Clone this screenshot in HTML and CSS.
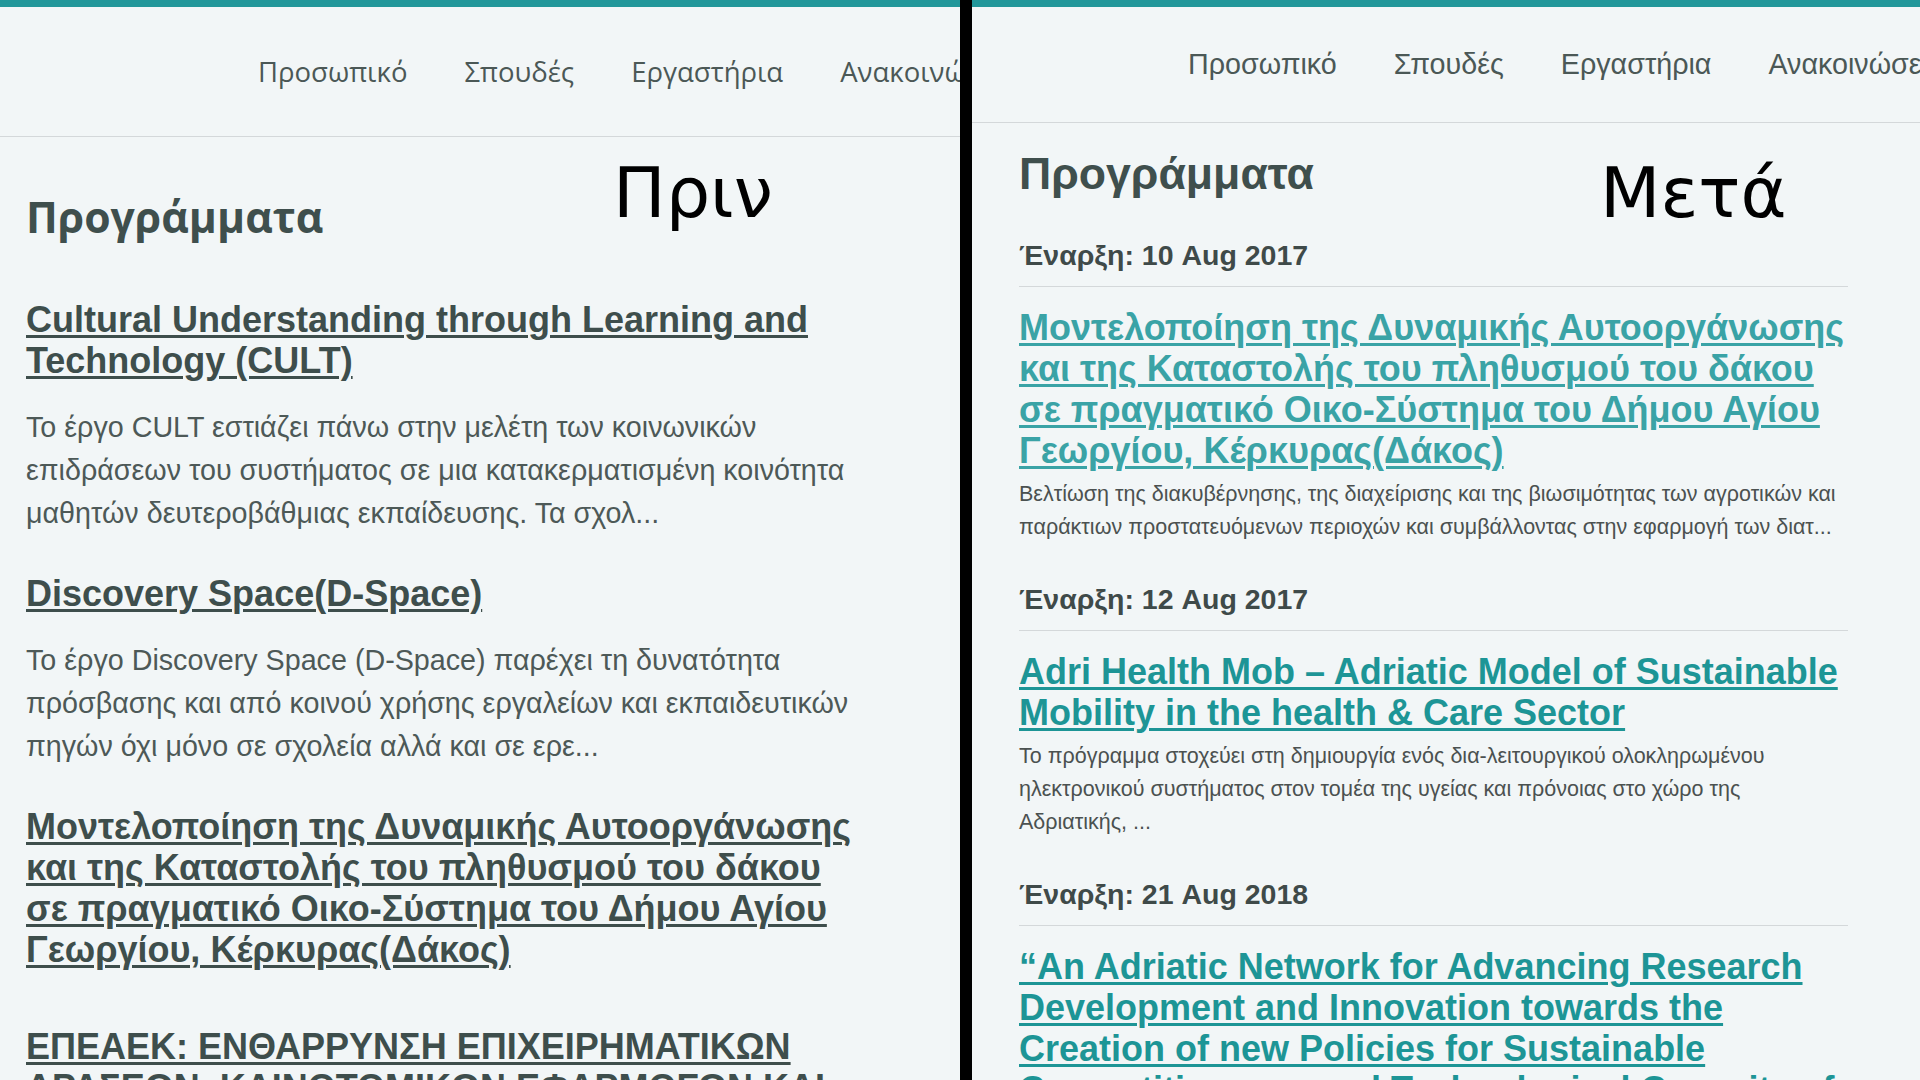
FILE: index.html
```html
<!DOCTYPE html>
<html lang="el">
<head>
<meta charset="utf-8">
<title>Προγράμματα — Πριν / Μετά</title>
<link rel="stylesheet" href="styles.css">
</head>
<body>
<div class="compare">
  <section class="panel before">
    <header class="topnav">
      <nav class="menu">
        <a href="#">Προσωπικό</a>
        <a href="#">Σπουδές</a>
        <a href="#">Εργαστήρια</a>
        <a href="#">Ανακοινώσεις</a>
      </nav>
    </header>
    <main class="content">
      <h2 class="page-title">Προγράμματα</h2>
      <div class="list">
        <article class="item">
          <a class="item-title" href="#">Cultural Understanding through Learning and Technology (CULT)</a>
          <p class="item-desc">Το έργο CULT εστιάζει πάνω στην μελέτη των κοινωνικών επιδράσεων του συστήματος σε μια κατακερματισμένη κοινότητα μαθητών δευτεροβάθμιας εκπαίδευσης. Τα σχολ...</p>
        </article>
        <article class="item">
          <a class="item-title" href="#">Discovery Space(D-Space)</a>
          <p class="item-desc">Το έργο Discovery Space (D-Space) παρέχει τη δυνατότητα πρόσβασης και από κοινού χρήσης εργαλείων και εκπαιδευτικών πηγών όχι μόνο σε σχολεία αλλά και σε ερε...</p>
        </article>
        <article class="item item-nodesc">
          <a class="item-title" href="#">Μοντελοποίηση της Δυναμικής Αυτοοργάνωσης και της Καταστολής του πληθυσμού του δάκου σε πραγματικό Οικο-Σύστημα του Δήμου Αγίου Γεωργίου, Κέρκυρας(Δάκος)</a>
        </article>
        <article class="item">
          <a class="item-title" href="#">ΕΠΕΑΕΚ: ΕΝΘΑΡΡΥΝΣΗ ΕΠΙΧΕΙΡΗΜΑΤΙΚΩΝ ΔΡΑΣΕΩΝ, ΚΑΙΝΟΤΟΜΙΚΩΝ ΕΦΑΡΜΟΓΩΝ ΚΑΙ ΣΥΝΕΡΓΑΣΙΩΝ</a>
        </article>
      </div>
    </main>
    <div class="stamp stamp-before">Πριν</div>
  </section>

  <div class="divider"></div>

  <section class="panel after">
    <header class="topnav">
      <nav class="menu">
        <a href="#">Προσωπικό</a>
        <a href="#">Σπουδές</a>
        <a href="#">Εργαστήρια</a>
        <a href="#">Ανακοινώσεις</a>
      </nav>
    </header>
    <main class="content">
      <h2 class="page-title">Προγράμματα</h2>
      <div class="list">
        <article class="item">
          <div class="date">Έναρξη: 10 Aug 2017</div>
          <a class="item-title visited" href="#">Μοντελοποίηση της Δυναμικής Αυτοοργάνωσης και της Καταστολής του πληθυσμού του δάκου σε πραγματικό Οικο-Σύστημα του Δήμου Αγίου Γεωργίου, Κέρκυρας(Δάκος)</a>
          <p class="item-desc">Βελτίωση της διακυβέρνησης, της διαχείρισης και της βιωσιμότητας των αγροτικών και παράκτιων προστατευόμενων περιοχών και συμβάλλοντας στην εφαρμογή των διατ...</p>
        </article>
        <article class="item">
          <div class="date">Έναρξη: 12 Aug 2017</div>
          <a class="item-title" href="#">Adri Health Mob – Adriatic Model of Sustainable Mobility in the health &amp; Care Sector</a>
          <p class="item-desc">Το πρόγραμμα στοχεύει στη δημιουργία ενός δια-λειτουργικού ολοκληρωμένου ηλεκτρονικού συστήματος στον τομέα της υγείας και πρόνοιας στο χώρο της Αδριατικής, ...</p>
        </article>
        <article class="item">
          <div class="date">Έναρξη: 21 Aug 2018</div>
          <a class="item-title" href="#">“An Adriatic Network for Advancing Research Development and Innovation towards the Creation of new Policies for Sustainable Competitiveness and Technological Capacity of SMEs”</a>
        </article>
      </div>
    </main>
    <div class="stamp stamp-after">Μετά</div>
  </section>
</div>
</body>
</html>
```

FILE: styles.css
```css
* { box-sizing: border-box; }

html, body {
  margin: 0;
  padding: 0;
  width: 1920px;
  height: 1080px;
  overflow: hidden;
  background: #f2f6f7;
}

.compare {
  display: flex;
  width: 1920px;
  height: 1080px;
}

.panel {
  position: relative;
  height: 1080px;
  overflow: hidden;
  background: #f2f6f7;
  border-top: 7px solid #22979a;
}

.before { width: 960px; flex: 0 0 960px; }
.after  { width: 948px; flex: 0 0 948px; }

.divider {
  flex: 0 0 12px;
  width: 12px;
  height: 1080px;
  background: #000;
}

/* ---------- top navigation ---------- */
.topnav {
  display: flex;
  align-items: center;
  border-bottom: 1px solid #d4d8da;
}

.menu {
  display: flex;
  align-items: center;
  gap: 57px;
  white-space: nowrap;
}

.menu a {
  color: #4b5856;
  text-decoration: none;
}

.before .topnav { height: 130px; padding-left: 258px; }
.before .menu a { font-family: "Open Sans", "Noto Sans", sans-serif; font-size: 27.5px; }

.after .topnav { height: 116px; padding-left: 216px; }
.after .menu a { font-family: "Liberation Sans", Arial, sans-serif; font-size: 28.7px; }

/* ---------- content ---------- */
.content { display: block; }

.page-title {
  margin: 0;
  color: #3f4f4d;
  font-weight: 700;
}

.list {
  display: flex;
  flex-direction: column;
}

.item {
  display: flex;
  flex-direction: column;
  align-items: flex-start;
}

.item-title {
  font-family: "Liberation Sans", Arial, sans-serif;
  font-weight: 700;
  font-size: 36px;
  line-height: 41px;
  text-decoration: underline;
  text-decoration-thickness: 3px;
  text-underline-offset: 3px;
}

.item-desc { margin: 0; font-family: "Liberation Sans", Arial, sans-serif; }

/* before */
.before .content { padding: 0 104px 0 26px; }
.before .page-title {
  font-family: "Open Sans", "Noto Sans", sans-serif;
  font-size: 42.7px;
  line-height: 53px;
  margin-top: 53px;
  margin-bottom: 56px;
}
.before .list { gap: 38px; }
.before .item { gap: 25px; }
.before .item-nodesc { margin-bottom: 18px; }
.before .item-title { color: #3e4e4c; }
.before .item-desc {
  font-size: 28.7px;
  line-height: 43px;
  color: #4d5957;
}

/* after */
.after .content { padding: 0 72px 0 47px; }
.after .page-title {
  font-family: "Liberation Sans", Arial, sans-serif;
  font-size: 44.6px;
  line-height: 50px;
  margin-top: 26px;
  margin-bottom: 39px;
}
.after .list { gap: 38px; }
.after .date {
  align-self: stretch;
  font-family: "Liberation Sans", Arial, sans-serif;
  font-weight: 700;
  font-size: 28.5px;
  line-height: 34px;
  color: #3f4a49;
  padding-bottom: 14px;
  border-bottom: 1px solid #d4d8da;
  margin-bottom: 20px;
}
.after .item-title { color: #1d9596; }
.after .item-title.visited { color: #3aa3a6; }
.after .item-desc {
  margin-top: 7px;
  font-size: 21.5px;
  line-height: 33px;
  color: #4b5150;
}

/* ---------- overlay labels ---------- */
.stamp {
  position: absolute;
  font-family: "DejaVu Sans", sans-serif;
  font-size: 70px;
  line-height: 70px;
  color: #000;
  white-space: nowrap;
}
.stamp-before { left: 613px; top: 151px; }
.stamp-after  { left: 628px; top: 151px; }
```
